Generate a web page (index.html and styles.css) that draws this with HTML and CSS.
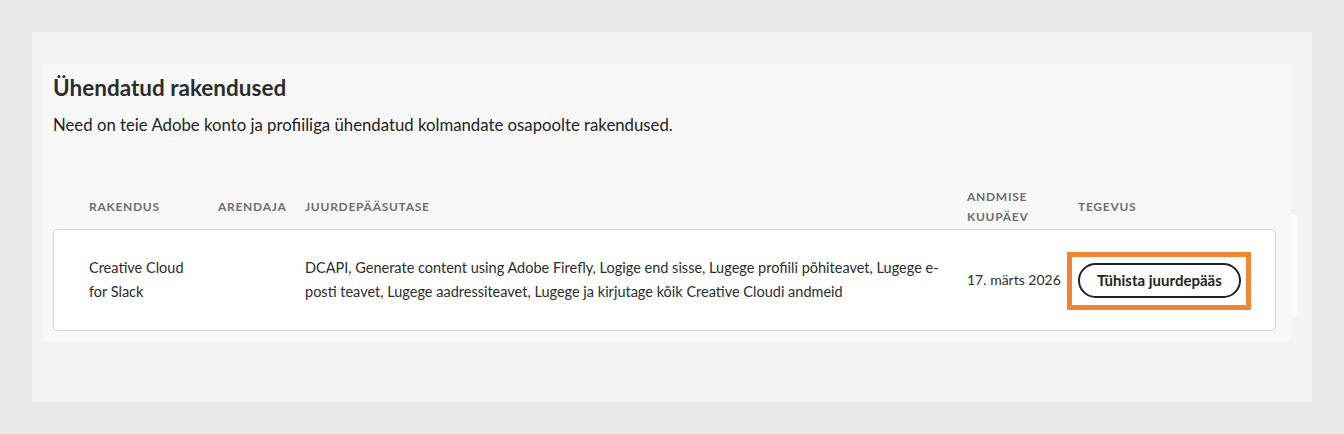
FILE: index.html
```html
<!DOCTYPE html>
<html lang="et">
<head>
<meta charset="utf-8">
<title>Ühendatud rakendused</title>
<link rel="stylesheet" href="styles.css">
</head>
<body>
<div class="page">
  <div class="outer">
    <section class="inner">
      <h2 class="title">Ühendatud rakendused</h2>
      <p class="subtitle">Need on teie Adobe konto ja profiiliga ühendatud kolmandate osapoolte rakendused.</p>
      <div class="table">
        <div class="grid head">
          <div>RAKENDUS</div>
          <div>ARENDAJA</div>
          <div>JUURDEPÄÄSUTASE</div>
          <div>ANDMISE<br>KUUPÄEV</div>
          <div>TEGEVUS</div>
        </div>
        <div class="card">
          <div class="grid row">
            <div class="app">Creative Cloud<br>for Slack</div>
            <div></div>
            <div class="access">DCAPI, Generate content using Adobe Firefly, Logige end sisse, Lugege profiili põhiteavet, Lugege e-posti teavet, Lugege aadressiteavet, Lugege ja kirjutage kõik Creative Cloudi andmeid</div>
            <div class="date">17. märts 2026</div>
            <div class="action"><span class="highlight"><button class="btn" type="button">Tühista juurdepääs</button></span></div>
          </div>
        </div>
      </div>
    </section>
    <div class="peek"></div>
  </div>
</div>
</body>
</html>
```
FILE: styles.css
```css
html, body {
  margin: 0;
  padding: 0;
  background: #e9e9e9;
}
body {
  font-family: Lato, "Noto Sans", sans-serif;
  color: #2c2c2c;
}
.page {
  padding: 32px 32px 0 32px;
}
.outer {
  position: relative;
  width: 1280px;
  height: 370px;
  box-sizing: border-box;
  background: #f4f4f4;
  padding: 32px 21px 0 11px;
}
.inner {
  background: #f8f8f8;
  padding: 10px 15px 11px 10px;
}
.title {
  margin: 0;
  font-size: 22.5px;
  line-height: 28px;
  font-weight: 700;
  color: #2c2c2c;
}
.subtitle {
  margin: 11px 0 0 0;
  font-size: 16.75px;
  line-height: 24px;
  color: #222;
}
.table {
  margin-top: 48px;
}
.grid {
  display: grid;
  grid-template-columns: 129px 87px 662px 111px 1fr;
  align-items: center;
}
.head {
  padding-left: 36px;
  height: 44px;
  font-size: 12px;
  line-height: 20px;
  font-weight: 700;
  letter-spacing: 0.06em;
  color: #6e6e6e;
}
.card {
  background: #fff;
  border: 1px solid #d6d6d6;
  border-radius: 4px;
  padding: 26px 0 26px 35px;
}
.row {
  font-size: 14.5px;
  line-height: 24px;
  color: #2c2c2c;
}
.access {
  padding-right: 24px;
}
.date {
  font-size: 14px;
}
.action {
  display: flex;
}
.highlight {
  position: relative;
  display: inline-flex;
}
.highlight::after {
  content: "";
  position: absolute;
  top: -11px;
  left: -11px;
  right: -10px;
  bottom: -12px;
  border: 5px solid #f08533;
  pointer-events: none;
}
.btn {
  height: 35px;
  padding: 0 17px;
  border: 2px solid #222;
  border-radius: 18px;
  background: #fff;
  font-family: Lato, "Noto Sans", sans-serif;
  font-size: 15px;
  font-weight: 700;
  color: #222;
  cursor: pointer;
}
.peek {
  position: absolute;
  left: 1259px;
  top: 183px;
  width: 6px;
  height: 102px;
  background: #fff;
  border-radius: 0 4px 4px 0;
}
```
